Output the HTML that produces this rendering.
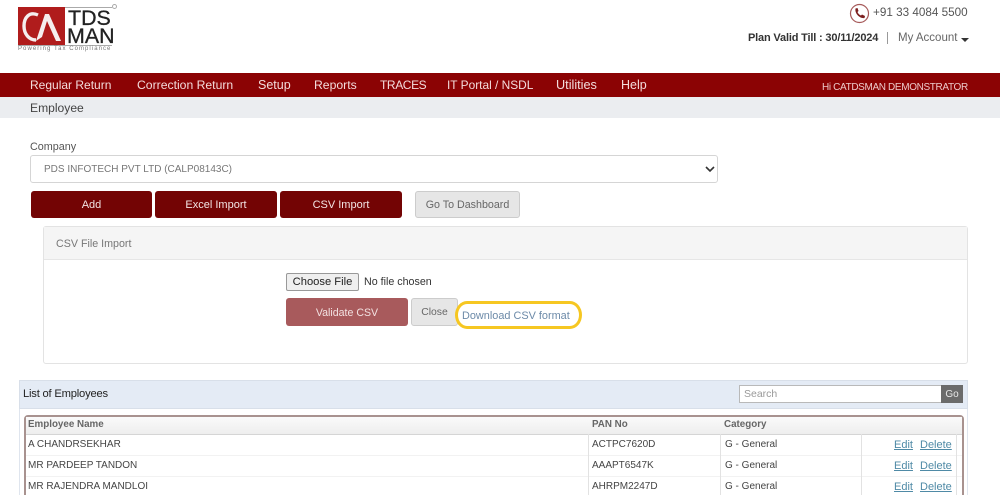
<!DOCTYPE html>
<html><head><meta charset="utf-8"><style>
html,body{margin:0;padding:0;background:#fff;width:1000px;height:495px;overflow:hidden;}
#w{width:1000px;height:495px;overflow:hidden;position:relative;font-family:"Liberation Sans",sans-serif;}
.a{position:absolute;white-space:nowrap;}
.nav{top:78px;font-size:12.2px;color:#f3dcdc;line-height:14px;}
.btn{background:#730404;color:#f2e4e4;border-radius:3px;text-align:center;font-size:11px;top:191px;height:27px;line-height:29px;}
.td{font-size:10px;color:#444;line-height:12px;}
.th{font-size:9.8px;color:#666;font-weight:bold;line-height:12px;}
.lk{font-size:11px;color:#4f8aa6;text-decoration:underline;line-height:13px;}
.sep{background:#e2e2e2;width:1px;}
</style></head><body><div id="w">
<!-- logo -->
<div class="a" style="left:18px;top:7px;width:94px;height:39px;border-top:1px solid #aaa;border-bottom:1px solid #aaa;box-sizing:border-box"></div>
<div class="a" style="left:18px;top:7px;width:47px;height:38px;background:#b01c1c"></div>
<svg class="a" style="left:18px;top:7px" width="47" height="38" viewBox="0 0 47 38"><path d="M20 8 C11 4 6 11 6 19 C6 27 11 33 18 33" fill="none" stroke="#f5eeee" stroke-width="3.4"/><path d="M18 34 L27 7 L31 7 L43 34 L38 34 L29 14 L24 30 Z" fill="#f5eeee"/></svg>
<div class="a" style="left:68px;top:8px;font-size:21.4px;line-height:21px;color:#222;-webkit-text-stroke:.3px #222">TDS</div>
<div class="a" style="left:67px;top:26px;font-size:21.4px;line-height:20px;color:#222;-webkit-text-stroke:.3px #222">MAN</div>
<div class="a" style="left:18px;top:46px;font-size:6px;line-height:7px;color:#777;letter-spacing:1.05px">Powering Tax Compliance</div>
<div class="a" style="left:112px;top:4px;width:3px;height:3px;border:1px solid #aaa;border-radius:50%"></div>
<!-- top right -->
<svg class="a" style="left:849px;top:3px" width="21" height="21" viewBox="0 0 21 21"><circle cx="10.5" cy="10.5" r="9" fill="#fff" stroke="#a65a5a" stroke-width="1.2"/><path d="M6.5 5.5 L8.5 5 L9.5 8 L8.5 9 C9 10.5 10.5 12 12 12.5 L13 11.5 L16 13 L15.5 15 C11 16 5.5 10.5 6.5 5.5 Z" fill="#7c1f1f"/></svg>
<div class="a" style="left:873px;top:6px;font-size:11.7px;line-height:14px;color:#555;">+91 33 4084 5500</div>
<div class="a" style="left:748px;top:31px;font-size:11px;line-height:14px;color:#333;font-weight:bold;letter-spacing:-.17px">Plan Valid Till : 30/11/2024</div>
<div class="a" style="left:887px;top:32px;width:1px;height:12px;background:#999"></div>
<div class="a" style="left:898px;top:31px;font-size:11.5px;line-height:14px;color:#666">My Account</div>
<div class="a" style="left:961px;top:38px;width:0;height:0;border:4px solid transparent;border-top:4px solid #333;border-bottom:0"></div>
<!-- nav -->
<div class="a" style="left:0;top:73px;width:1000px;height:24px;background:#8b0304"></div>
<div class="a nav" style="left:30px;font-size:12px">Regular Return</div>
<div class="a nav" style="left:137px;font-size:12.2px">Correction Return</div>
<div class="a nav" style="left:258px;font-size:12.5px">Setup</div>
<div class="a nav" style="left:314px;font-size:12.2px">Reports</div>
<div class="a nav" style="left:380px;font-size:12px;letter-spacing:-.4px">TRACES</div>
<div class="a nav" style="left:447px;font-size:11.9px">IT Portal / NSDL</div>
<div class="a nav" style="left:556px;font-size:12.7px">Utilities</div>
<div class="a nav" style="left:621px;font-size:12.5px">Help</div>
<div class="a" style="left:822px;top:81px;font-size:10px;line-height:13px;color:#eccaca;letter-spacing:-.36px">Hi CATDSMAN DEMONSTRATOR</div>
<div class="a" style="left:0;top:97px;width:1000px;height:21px;background:#ebedf0"></div>
<div class="a" style="left:30px;top:101px;font-size:12.1px;line-height:14px;color:#444">Employee</div>
<!-- company -->
<div class="a" style="left:30px;top:140px;font-size:10.8px;line-height:14px;color:#555">Company</div>
<div class="a" style="left:30px;top:155px;width:688px;height:28px;box-sizing:border-box;border:1px solid #d5d5d5;border-radius:3px;background:#fff"></div>
<div class="a" style="left:44px;top:163px;font-size:10px;line-height:14px;color:#777">PDS INFOTECH PVT LTD (CALP08143C)</div>
<svg class="a" style="left:705px;top:166px" width="10" height="7" viewBox="0 0 10 7"><path d="M1 1 L5 5 L9 1" fill="none" stroke="#333" stroke-width="1.6"/></svg>
<!-- buttons -->
<div class="a btn" style="left:31px;width:121px">Add</div>
<div class="a btn" style="left:155px;width:122px">Excel Import</div>
<div class="a btn" style="left:280px;width:122px">CSV Import</div>
<div class="a" style="left:415px;top:191px;width:105px;height:27px;box-sizing:border-box;border:1px solid #ccc;border-radius:3px;background:#e6e6e6;text-align:center;font-size:10.7px;line-height:27px;color:#666">Go To Dashboard</div>
<!-- panel -->
<div class="a" style="left:43px;top:226px;width:925px;height:138px;box-sizing:border-box;border:1px solid #e3e3e3;border-radius:3px;background:#fff"></div>
<div class="a" style="left:44px;top:227px;width:923px;height:33px;background:#f5f5f5;border-bottom:1px solid #e6e6e6;box-sizing:border-box"></div>
<div class="a" style="left:56px;top:237px;font-size:10.7px;line-height:14px;color:#777">CSV File Import</div>
<div class="a" style="left:286px;top:273px;width:73px;height:18px;box-sizing:border-box;border:1px solid #999;border-radius:2px;background:#efefef;text-align:center;font-size:11.2px;line-height:16px;color:#222">Choose File</div>
<div class="a" style="left:364px;top:275px;font-size:10.7px;line-height:14px;color:#333">No file chosen</div>
<div class="a" style="left:286px;top:298px;width:122px;height:28px;border-radius:3px;background:#a85a5c;color:#f3e2e2;text-align:center;font-size:10.6px;line-height:30px">Validate CSV</div>
<div class="a" style="left:411px;top:298px;width:47px;height:28px;box-sizing:border-box;border:1px solid #ccc;border-radius:3px;background:#e6e6e6;text-align:center;font-size:10.4px;line-height:28px;color:#666">Close</div>
<div class="a" style="left:455px;top:301px;width:127px;height:28px;box-sizing:border-box;border:3px solid #f6c722;border-radius:12px/14px"></div>
<div class="a" style="left:462px;top:309px;font-size:10.9px;line-height:14px;color:#6c8aa8;">Download CSV format</div>
<!-- list -->
<div class="a" style="left:19px;top:380px;width:949px;height:120px;box-sizing:border-box;border:1px solid #dfe5ee;background:#fff"></div>
<div class="a" style="left:19px;top:380px;width:949px;height:29px;box-sizing:border-box;background:#e4ebf5;border:1px solid #d8dfe9"></div>
<div class="a" style="left:23px;top:387px;font-size:11.2px;line-height:14px;color:#222;letter-spacing:-.2px">List of Employees</div>
<div class="a" style="left:739px;top:385px;width:203px;height:18px;box-sizing:border-box;border:1px solid #b9b9b9;background:#fff;font-size:10.5px;line-height:17px;color:#999;padding-left:4px">Search</div>
<div class="a" style="left:941px;top:385px;width:22px;height:18px;background:#6b6b6b;color:#e8e8e8;text-align:center;font-size:10px;line-height:19px;">Go</div>
<div class="a" style="left:24px;top:415px;width:940px;height:90px;box-sizing:border-box;border:2px solid #a8928f;border-radius:4px;background:#fff"></div>
<div class="a" style="left:26px;top:417px;width:936px;height:17px;background:linear-gradient(#fafafa,#eeeeee);border-bottom:1px solid #d5d5d5"></div>
<div class="a" style="left:26px;top:455px;width:936px;height:1px;background:#f2f2f2"></div>
<div class="a" style="left:26px;top:476px;width:936px;height:1px;background:#f2f2f2"></div>
<div class="a sep" style="left:588px;top:434px;height:61px"></div>
<div class="a sep" style="left:720px;top:434px;height:61px"></div>
<div class="a sep" style="left:861px;top:434px;height:61px"></div>
<div class="a sep" style="left:956px;top:434px;height:61px"></div>
<div class="a th" style="left:28px;top:419px">Employee Name</div>
<div class="a th" style="left:592px;top:419px">PAN No</div>
<div class="a th" style="left:724px;top:419px">Category</div>
<div class="a td" style="left:28px;top:439px">A CHANDRSEKHAR</div>
<div class="a td" style="left:592px;top:439px">ACTPC7620D</div>
<div class="a td" style="left:725px;top:439px">G - General</div>
<div class="a lk" style="left:894px;top:439px">Edit</div>
<div class="a lk" style="left:920px;top:439px">Delete</div>
<div class="a td" style="left:28px;top:460px">MR PARDEEP TANDON</div>
<div class="a td" style="left:592px;top:460px">AAAPT6547K</div>
<div class="a td" style="left:725px;top:460px">G - General</div>
<div class="a lk" style="left:894px;top:460px">Edit</div>
<div class="a lk" style="left:920px;top:460px">Delete</div>
<div class="a td" style="left:28px;top:481px">MR RAJENDRA MANDLOI</div>
<div class="a td" style="left:592px;top:481px">AHRPM2247D</div>
<div class="a td" style="left:725px;top:481px">G - General</div>
<div class="a lk" style="left:894px;top:481px">Edit</div>
<div class="a lk" style="left:920px;top:481px">Delete</div>
</div></body></html>
